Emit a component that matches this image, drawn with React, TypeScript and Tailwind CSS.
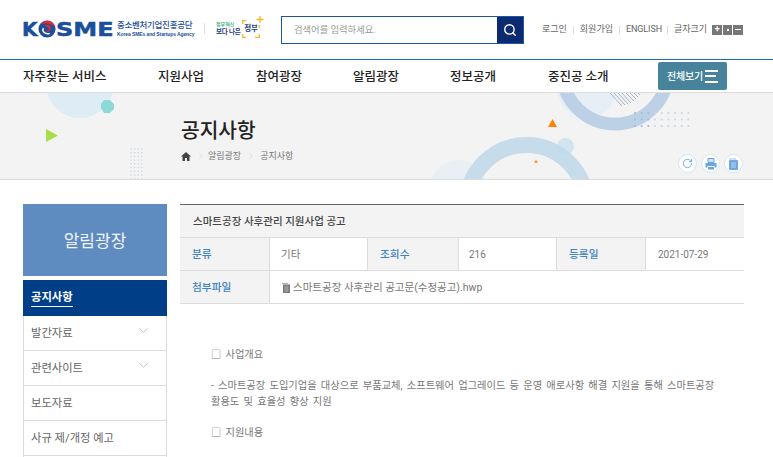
import React from "react";
import { ChevronDown, ChevronRight, RotateCw, Search } from "lucide-react";

const NAV = ["자주찾는 서비스", "지원사업", "참여광장", "알림광장", "정보공개", "중진공 소개"];

function Logo() {
  return (
    <div className="flex items-center">
      <div className="flex items-center font-['DejaVu_Sans',sans-serif] text-[20px] leading-none font-bold text-[#1b4e9b] [-webkit-text-stroke:0.5px_#1b4e9b]">
        <span className="-ml-[1px] w-[16px]">K</span>
        <svg width="18" height="18" viewBox="0 0 20 20">
          <circle cx="10" cy="10" r="9.5" fill="#1b4e9b" />
          <path d="M3 5C7-1 17-1 19 8 15 4 9 3 3 5Z" fill="#e2292f" stroke="none" />
          <path d="M7 6c5-2 8 1 7 4-1 4-5 4-7 2 3 1 5 0 5-2 0-2-3-3-5-4Z" fill="#e2292f" stroke="none" />
          <path d="M6 9c-2 4 2 7 7 6" stroke="#fff" strokeWidth="1.6" fill="none" />
        </svg>
        <span className="block w-[58px] origin-left scale-x-[1.2]">SME</span>
      </div>
      <div className="ml-[3px] flex w-[78px] flex-col">
        <span className="text-[8.500px] leading-[11px] font-medium tracking-[-0.3px] whitespace-nowrap text-[#1b4e9b]">중소벤처기업진흥공단</span>
        <span className="font-['Liberation_Sans',sans-serif] text-[5px] leading-[7px] font-bold tracking-[-0.1px] whitespace-nowrap text-[#1b4e9b]">Korea SMEs and Startups Agency</span>
      </div>
      <div className="mr-[11px] ml-[9px] h-[11px] w-px bg-[#e0e0e0]" />
      <div className="flex w-[24px] flex-col">
        <span className="text-[5px] leading-[7px] font-medium whitespace-nowrap text-[#2aa772]">정부혁신</span>
        <span className="text-[6.500px] leading-[9px] font-bold tracking-[-0.2px] whitespace-nowrap text-[#23407f]">보다 나은</span>
      </div>
      <div className="relative ml-[2px] flex h-[18px] w-[18px] items-center justify-center">
        <svg width="22" height="22" viewBox="0 0 22 22" className="absolute -top-[4px] left-0">
          <path d="M.7 8V4.700H4M.7 18v3.300H4M13 21.300h4.300V18M17.300 12V9" stroke="#f7b52c" strokeWidth="1.3" fill="none" />
          <path d="M18 0v7M14.500 3.500h7" stroke="#f7b52c" strokeWidth="1.3" />
        </svg>
        <span className="relative text-[7.500px] leading-none font-bold tracking-[-0.2px] whitespace-nowrap text-[#23407f]">정부</span>
      </div>
    </div>
  );
}

function Header() {
  return (
    <div className="flex h-[59px] items-center pl-[23px]">
      <div className="relative -top-[1px] w-[258px] shrink-0">
        <Logo />
      </div>
      <div className="flex h-[28px] w-[243px] shrink-0 border border-[#1a5aa5] bg-white">
        <div className="flex-1 pl-[12px] text-[9.300px] leading-[25px] text-[#999]">검색어를 입력하세요.</div>
        <div className="flex w-[26px] items-center justify-center bg-[#0c2a70]">
          <Search size={14} strokeWidth={2.4} color="#fff" />
        </div>
      </div>
      <div className="ml-[18px] flex items-center text-[9px] whitespace-nowrap text-[#666]">
        <span>로그인</span>
        <span className="mx-[6px] h-[8px] w-px bg-[#ddd]" />
        <span>회원가입</span>
        <span className="mx-[6px] h-[8px] w-px bg-[#ddd]" />
        <span className="w-[35px] tracking-[-0.1px]">ENGLISH</span>
        <span className="mx-[6px] h-[8px] w-px bg-[#ddd]" />
        <span>글자크기</span>
        <div className="ml-[5px] flex h-[10px] w-[31px] gap-px">
          <span className="flex flex-1 items-center justify-center bg-[#777] text-[9px] leading-none font-bold text-white">+</span>
          <span className="flex w-[9px] items-center justify-center bg-[#777]"><i className="block h-[2px] w-[2px] bg-white" /></span>
          <span className="flex flex-1 items-center justify-center bg-[#777]"><i className="block h-[1px] w-[6px] bg-white" /></span>
        </div>
      </div>
    </div>
  );
}

function Nav() {
  return (
    <div className="flex h-[34px] items-center border-t border-b border-t-[#1c6db3] border-b-[#dcdcdc] bg-white pr-[46px] pl-[23px]">
      <div className="relative top-[1px] flex flex-1 items-center text-[12.500px] font-medium whitespace-nowrap text-[#222]">
        <span className="w-[135px]">{NAV[0]}</span>
        <span className="w-[98px]">{NAV[1]}</span>
        <span className="w-[97px]">{NAV[2]}</span>
        <span className="w-[97px]">{NAV[3]}</span>
        <span className="w-[98px]">{NAV[4]}</span>
        <span>{NAV[5]}</span>
      </div>
      <div className="flex h-[28px] w-[69px] items-center justify-center gap-[2px] rounded-[2px] bg-[#47849c] text-[10px] font-medium tracking-[-0.2px] whitespace-nowrap text-white">
        전체보기
        <div className="flex w-[13px] flex-col gap-[3.500px]">
          <i className="block h-[2px] bg-white" />
          <i className="block h-[2px] w-[11px] bg-white" />
          <i className="block h-[2px] bg-white" />
        </div>
      </div>
    </div>
  );
}

function BannerArt() {
  const dotsA = [];
  for (let x = 0; x < 9; x++) for (let y = 0; y < 3; y++) dotsA.push(<circle key={x + "-" + y} cx={635 + x * 6.67} cy={20 + y * 6.5} r="1.1" fill={x < 3 ? "#9dbddc" : "#c5d8ea"} />);
  const dotsB = [];
  for (let x = 0; x < 4; x++) for (let y = 0; y < 9; y++) dotsB.push(<circle key={x + "_" + y} cx={131 + x * 3.6} cy={56 + y * 3.7} r="0.7" fill="#c5d2e6" />);
  return (
    <svg width="773" height="86" viewBox="0 0 773 86" className="absolute top-0 left-0">
      <circle cx="80" cy="-9" r="34" fill="#deedf5" />
      <polygon points="104,7 110,7 114,11 114,16 110,20 104,20 101,15 101,11" fill="#8cd9d6" />
      <polygon points="46,36 58,42.500 46,49" fill="#a8de4b" />
      {dotsB}
      <circle cx="587" cy="-5" r="30" fill="#e6eff6" />
      <circle cx="615" cy="-22" r="53" fill="none" stroke="#bdd1e6" strokeWidth="13" />
      <path d="M610 0l12 13M614 0l11 12M618 0l10 11M622 0l9 10M626 0l8 8M630 0l6 6M634 0l4 4M638 0l2 2" stroke="#a3b4c6" strokeWidth="1" />
      {dotsA}
      <polygon points="548,34 552.500,26 557,34" fill="#ff8200" />
      <polygon points="534,70 536,66.500 538,70" fill="#ff9a33" />
      <circle cx="458" cy="95" r="28" fill="#e8f0f5" />
      <circle cx="526.500" cy="111.500" r="59.500" fill="none" stroke="#c6dcea" strokeWidth="16" />
      <circle cx="565.500" cy="53.500" r="8.500" fill="#bcdcec" fillOpacity="0.6" />
    </svg>
  );
}

function RoundButton({ children }: { children: React.ReactNode }) {
  return (
    <div className="flex h-[19px] w-[19px] items-center justify-center rounded-full border border-[#d5e6f5] bg-white text-[#6aa6de]">
      {children}
    </div>
  );
}

function Banner() {
  return (
    <div className="relative h-[87px] overflow-hidden border-b border-[#dcdcdc] bg-[#f3f3f3]">
      <BannerArt />
      <div className="relative pt-[24px] pl-[181px]">
        <div className="text-[20.300px] leading-[28px] font-medium text-[#222]">공지사항</div>
        <div className="mt-[4px] flex items-center text-[9px] leading-[14px] text-[#777]">
          <svg width="10" height="9" viewBox="0 0 10 9" className="mr-[5px]">
            <path d="M5 0 10 4.500H8.500V9H6V6H4V9H1.500V4.500H0Z" fill="#444" />
          </svg>
          <ChevronRight size={10} strokeWidth={1} color="#bbb" className="mr-[2px]" />
          <span>알림광장</span>
          <ChevronRight size={10} strokeWidth={1} color="#bbb" className="mr-[4px] ml-[5px]" />
          <span>공지사항</span>
        </div>
      </div>
      <div className="absolute top-[61px] right-[30px] flex gap-[4px]">
        <RoundButton><RotateCw size={11} strokeWidth={2} /></RoundButton>
        <RoundButton>
          <svg width="12" height="12" viewBox="0 0 12 12">
            <path d="M3 0.500h6v4H3Z" fill="#cfe2f5" stroke="#6aa6de" />
            <path d="M0.500 5h11v4.500H9.500V8h-7v1.500H0.500Z" fill="#6aa6de" />
            <path d="M3 9h6v2.500H3Z" fill="#6aa6de" />
          </svg>
        </RoundButton>
        <RoundButton>
          <svg width="11" height="12" viewBox="0 0 11 12">
            <path d="M1 0.500h7v1H1Z" fill="#9cc3e8" />
            <path d="M1.500 2.500h8v9h-8Z" fill="#6aa6de" stroke="#4f8fce" strokeWidth="0.600" />
            <path d="M3 5h5M3 7h5M3 9h5" stroke="#cfe2f5" strokeWidth="0.800" />
          </svg>
        </RoundButton>
      </div>
    </div>
  );
}

function Sidebar() {
  const items = [
    { label: "발간자료", more: true },
    { label: "관련사이트", more: true },
    { label: "보도자료" },
    { label: "사규 제/개정 예고" },
  ];
  return (
    <div className="w-[144px]">
      <div className="flex h-[72px] items-center justify-center bg-[#5f8cc0] pt-[3px] text-[17px] text-[#f1f6fb]">알림광장</div>
      <div className="mt-[4px] flex h-[36px] items-center bg-[#003f88] pt-[1px] pl-[8px] text-[11.300px] font-bold text-white">
        <span className="border-b border-white leading-[16px]">공지사항</span>
      </div>
      {items.map((it) => (
        <div key={it.label} className="flex h-[35px] items-center justify-between border-x border-b border-[#dcdcdc] pt-[3px] pr-[15px] pl-[7px] text-[11.300px] text-[#666]">
          <span>{it.label}</span>
          {it.more && <ChevronDown size={15} strokeWidth={0.8} color="#888" className="relative -top-[4px]" />}
        </div>
      ))}
      <div className="h-[10px] border-x border-[#dcdcdc]" />
    </div>
  );
}

function Label({ children, w }: { children: React.ReactNode; w: string }) {
  return (
    <div className={`flex items-center border-r border-[#dcdcdc] bg-[#f3f3f3] pt-[3px] pl-[12px] text-[10.700px] font-medium text-[#3f84c5] ${w}`}>
      {children}
    </div>
  );
}

function Value({ children, w }: { children: React.ReactNode; w: string }) {
  return <div className={`flex items-center pt-[1px] text-[10.500px] text-[#777] ${w}`}>{children}</div>;
}

function Detail() {
  return (
    <div className="w-[564px]">
      <div className="flex h-[34px] items-center border-t border-b border-t-[#666] border-b-[#dcdcdc] bg-[#f3f3f3] pt-[1px] pl-[13px] text-[10.500px] font-medium text-[#444]">
        스마트공장 사후관리 지원사업 공고
      </div>
      <div className="flex h-[33px] border-b border-[#dcdcdc]">
        <Label w="w-[90px]">분류</Label>
        <Value w="w-[98px] border-r border-[#dcdcdc] pl-[11px]">기타</Value>
        <Label w="w-[91px]">조회수</Label>
        <Value w="w-[97px] pl-[10px] text-[10px]">216</Value>
        <Label w="w-[90px] border-l">등록일</Label>
        <Value w="flex-1 pl-[12px] text-[10px]">2021-07-29</Value>
      </div>
      <div className="flex h-[33px] border-b border-[#dcdcdc]">
        <Label w="w-[90px]">첨부파일</Label>
        <div className="flex flex-1 items-center pt-[1px] pl-[11px] text-[10.500px] text-[#777]">
          <svg width="10" height="10" viewBox="0 0 10 10" className="mr-[2px]">
            <path d="M1 0h6v1H1Z" fill="#aaa" />
            <path d="M2 1.500h7v8.500H2Z" fill="#777" />
            <path d="M3.500 4h4M3.500 6h4M3.500 8h4" stroke="#ddd" strokeWidth="0.700" />
          </svg>
          스마트공장 사후관리 공고문(수정공고).hwp
        </div>
      </div>
      <div className="pt-[43px] pr-[24px] pl-[31px] text-[10.250px] leading-[15.500px] break-keep [word-spacing:1.7px] text-[#777]">
        <p>□ 사업개요</p>
        <p className="mt-[15.500px]">- 스마트공장 도입기업을 대상으로 부품교체, 소프트웨어 업그레이드 등 운영 애로사항 해결 지원을 통해 스마트공장 활용도 및 효율성 향상 지원</p>
        <p className="mt-[16px]">□ 지원내용</p>
      </div>
    </div>
  );
}

export default function App() {
  return (
    <div className="h-[457px] overflow-hidden bg-white font-['Roboto','Noto_Sans_CJK_KR',sans-serif]">
      <Header />
      <Nav />
      <Banner />
      <div className="flex gap-[13px] pt-[24px] pl-[23px]">
        <Sidebar />
        <Detail />
      </div>
    </div>
  );
}
